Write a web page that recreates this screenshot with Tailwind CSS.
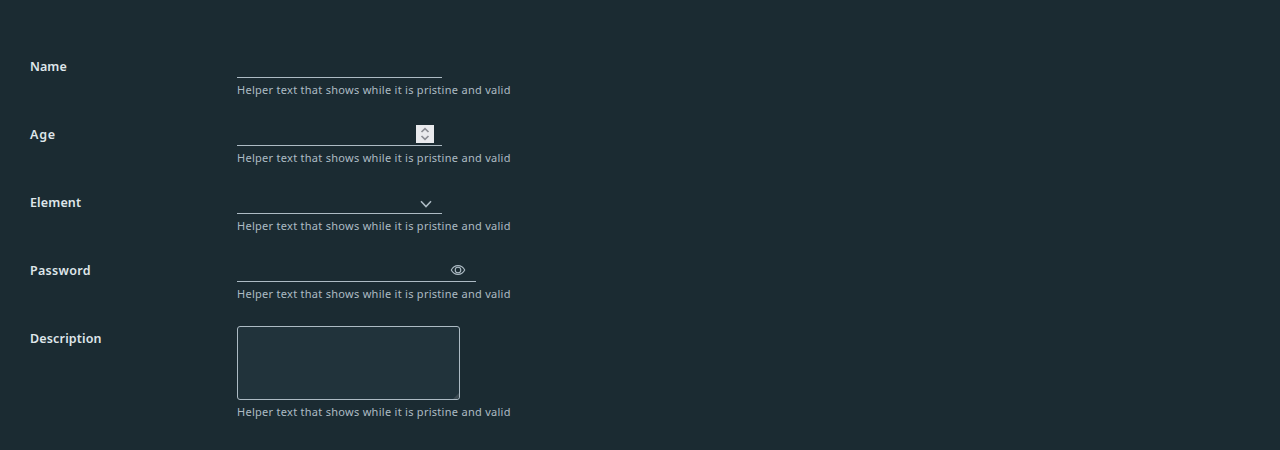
<!DOCTYPE html>
<html lang="en">
<head>
<meta charset="utf-8">
<title>Form</title>
<script src="https://cdn.jsdelivr.net/npm/@tailwindcss/browser@4"></script>
</head>
<body class="h-[450px] overflow-hidden bg-[#1b2b32] font-['Noto_Sans',sans-serif] text-[#adbbc4]">
<form class="flex flex-col pl-[30px] pt-[54px]">
  <div class="flex h-[68px]">
    <label class="w-[207px] text-[12.5px] leading-[25px] font-semibold text-[#dfe6ea]"><span class="tracking-[0.05px]">Name</span></label>
    <div><div class="h-6 w-[205px] border-b border-[#adbbc4]"></div>
      <p class="mt-1 whitespace-nowrap text-[11px] leading-4 tracking-[0.28px]">Helper text that shows while it is pristine and valid</p></div>
  </div>
  <div class="flex h-[68px]">
    <label class="w-[207px] text-[12.5px] leading-[25px] font-semibold text-[#dfe6ea]"><span class="tracking-[0.8px]">Age</span></label>
    <div><div class="flex h-6 w-[205px] items-start justify-end border-b border-[#adbbc4] pt-[3px] pr-2">
        <svg class="h-[18px] w-[18px] bg-[#e9eaed]" viewBox="0 0 18 18" fill="none" stroke="#8b8d94" stroke-width="1.7"><path d="M5.5 7 9 3.7 12.5 7M5.5 11 9 14.3 12.5 11"/></svg>
      </div>
      <p class="mt-1 whitespace-nowrap text-[11px] leading-4 tracking-[0.28px]">Helper text that shows while it is pristine and valid</p></div>
  </div>
  <div class="flex h-[68px]">
    <label class="w-[207px] text-[12.5px] leading-[25px] font-semibold text-[#dfe6ea]"><span class="tracking-[0.14px]">Element</span></label>
    <div><div class="flex h-6 w-[205px] justify-end border-b border-[#adbbc4] pt-[9px] pr-[9px]">
        <svg class="h-[10px] w-[14px]" viewBox="0 0 14 10" fill="none" stroke="#adbbc4" stroke-width="1.6"><path d="M2 2.3 7 7.5 12 2.3"/></svg>
      </div>
      <p class="mt-1 whitespace-nowrap text-[11px] leading-4 tracking-[0.28px]">Helper text that shows while it is pristine and valid</p></div>
  </div>
  <div class="flex h-[68px]">
    <label class="w-[207px] text-[12.5px] leading-[25px] font-semibold text-[#dfe6ea]"><span class="tracking-[0.3px]">Password</span></label>
    <div><div class="flex h-6 w-[239px] justify-end border-b border-[#adbbc4] pt-[7px] pr-[10px]">
        <svg class="h-[10px] w-4" viewBox="0 0 16 10" fill="none" stroke="#adbbc4" stroke-width="1.1"><path d="M1.3 5C2.8 2 5 .6 8 .6S13.2 2 14.7 5C13.2 8 11 9.4 8 9.4S2.8 8 1.3 5Z"/><circle cx="8" cy="5" r="2.8"/></svg>
      </div>
      <p class="mt-1 whitespace-nowrap text-[11px] leading-4 tracking-[0.28px]">Helper text that shows while it is pristine and valid</p></div>
  </div>
  <div class="flex">
    <label class="w-[207px] text-[12.5px] leading-[25px] font-semibold text-[#dfe6ea]"><span class="tracking-[0.16px]">Description</span></label>
    <div><div class="flex h-[74px] w-[223px] items-end justify-end rounded-[3px] border border-[#adbbc4] bg-[#21333b]">
        <svg class="h-[6px] w-[6px]" viewBox="0 0 6 6"><path d="M6 0V4L4 6H0Z" fill="#3d4b52"/></svg>
      </div>
      <p class="mt-1 whitespace-nowrap text-[11px] leading-4 tracking-[0.28px]">Helper text that shows while it is pristine and valid</p></div>
  </div>
</form>
</body>
</html>
